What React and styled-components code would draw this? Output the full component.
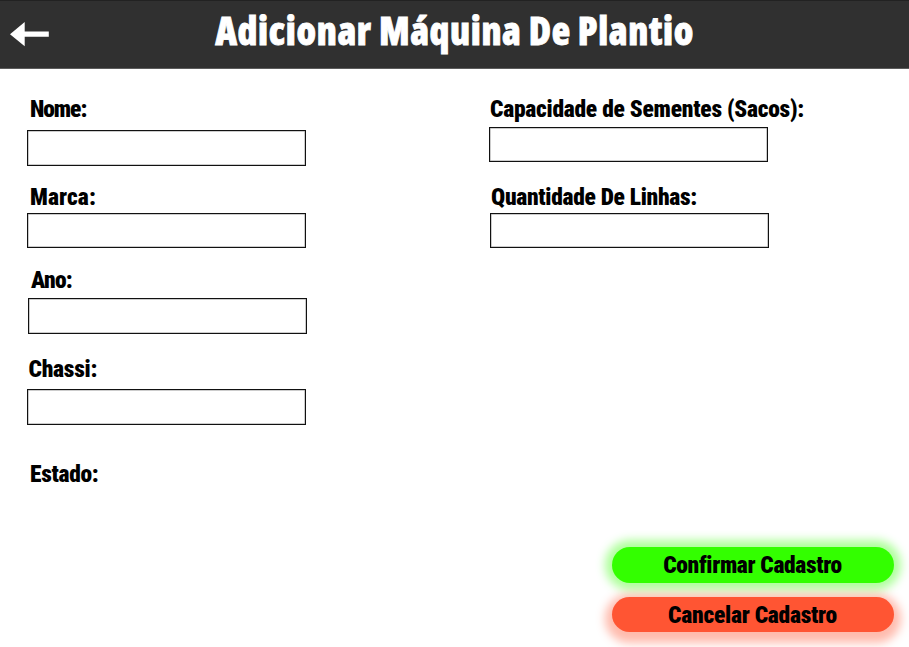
import React from 'react';
import styled, { createGlobalStyle } from 'styled-components';

const GlobalStyle = createGlobalStyle`
  *, *::before, *::after { box-sizing: border-box; }
  body { margin: 0; background: #fff; }
`;

const Page = styled.div`
  display: flex;
  flex-direction: column;
  width: 909px;
  height: 647px;
  overflow: hidden;
  background: #fff;
`;

const Header = styled.header`
  display: grid;
  grid-template-columns: 60px 1fr 60px;
  flex: none;
  height: 69px;
  border-top: 1px solid #222;
  border-bottom: 1px solid #5c5c5c;
  background: #303030;
`;

const BackButton = styled.button`
  display: flex;
  align-items: flex-start;
  padding: 21px 0 0 10px;
  border: 0;
  background: none;
`;

const Title = styled.h1`
  margin: 0;
  padding-top: 1px;
  text-align: center;
  white-space: nowrap;
  color: #fff;
  font: 800 38px/56px "Open Sans", sans-serif;
  font-stretch: 75%;
  letter-spacing: 0.6px;
  -webkit-text-stroke: 0.8px #fff;
`;

const Form = styled.form`
  display: grid;
  grid-template-columns: 462px 1fr;
  flex: 1;
  min-height: 0;
  padding: 28px 0 0 27px;
`;

const Column = styled.div`
  display: flex;
  flex-direction: column;
`;

const FieldGroup = styled.div`
  display: flex;
  flex-direction: column;
  gap: ${(p) => p.$gap}px;
  margin-top: ${(p) => p.$top || 0}px;
  padding-left: ${(p) => p.$indent || 0}px;
`;

const Label = styled.label`
  padding-left: ${(p) => p.$indent}px;
  white-space: nowrap;
  color: #000;
  font: 900 23.5px/24px Roboto, sans-serif;
  font-stretch: 75%;
  letter-spacing: ${(p) => p.$tracking}px;
`;

const Input = styled.input`
  width: 279px;
  height: ${(p) => p.$height}px;
  padding: 0 8px;
  border: 1px solid #111;
  border-radius: 0;
  outline: 0;
  background: #fff;
  box-shadow: inset 0 0 0 0.5px #999;
  font: 900 20px Roboto, sans-serif;
`;

const Actions = styled.div`
  display: flex;
  flex-direction: column;
  align-items: flex-start;
  gap: 14px;
  margin: auto 0 15px 123px;
`;

const ActionButton = styled.button`
  width: 282px;
  height: 35.5px;
  padding: 1px 1px 0 0;
  border: 0;
  border-radius: 18px;
  color: #000;
  background: ${(p) => p.$color};
  box-shadow: 0 ${(p) => p.$drop}px 10px 7px ${(p) => p.$glow};
  font: 900 23.5px/35px Roboto, sans-serif;
  font-stretch: 75%;
  letter-spacing: ${(p) => p.$tracking}px;
`;

function Field({ id, label, top, gap, indent, labelIndent, tracking, height }) {
  return (
    <FieldGroup $top={top} $gap={gap} $indent={indent}>
      <Label htmlFor={id} $indent={labelIndent} $tracking={tracking}>{label}</Label>
      {height && <Input id={id} $height={height} />}
    </FieldGroup>
  );
}

export default function App() {
  return (
    <>
      <GlobalStyle />
      <Page>
        <Header>
          <BackButton aria-label="Voltar">
            <svg width="39" height="25" viewBox="0 0 39 25" fill="#fff">
              <path d="M0 12.2 14.7 0v9.5h24.1v5.3H14.7v9.5z" />
            </svg>
          </BackButton>
          <Title>Adicionar Máquina De Plantio</Title>
        </Header>
        <Form>
          <Column>
            <Field id="nome" label="Nome:" gap={9} labelIndent={3} tracking={-1.05} height={36} />
            <Field id="marca" label="Marca:" top={19} gap={4} labelIndent={3} tracking={0.1} height={35} />
            <Field id="ano" label="Ano:" top={20} gap={6} indent={1} labelIndent={3} tracking={-0.7} height={36} />
            <Field id="chassi" label="Chassi:" top={23} gap={8} labelIndent={1.5} tracking={-0.25} height={36} />
            <Field id="estado" label="Estado:" top={37} gap={0} labelIndent={3} tracking={-0.3} />
          </Column>
          <Column>
            <Field id="capacidade" label="Capacidade de Sementes (Sacos):" gap={6} labelIndent={1} tracking={-0.25} height={35} />
            <Field id="linhas" label="Quantidade De Linhas:" top={23} gap={4} indent={1} labelIndent={1} tracking={-0.3} height={35} />
            <Actions>
              <ActionButton type="button" $color="#33ff00" $drop={0} $tracking={-0.35} $glow="rgba(51, 255, 0, 0.4)">
                Confirmar Cadastro
              </ActionButton>
              <ActionButton type="button" $color="#ff5533" $drop={4} $tracking={-0.25} $glow="rgba(255, 85, 51, 0.4)">
                Cancelar Cadastro
              </ActionButton>
            </Actions>
          </Column>
        </Form>
      </Page>
    </>
  );
}
